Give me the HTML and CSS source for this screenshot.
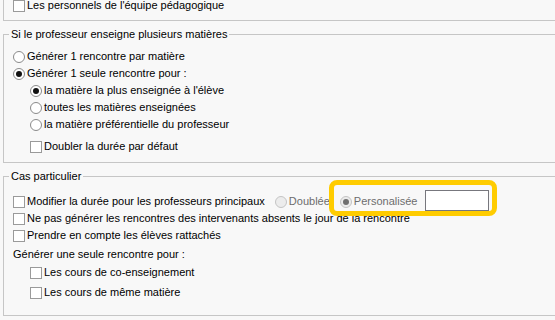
FILE: index.html
```html
<!DOCTYPE html>
<html lang="fr">
<head>
<meta charset="utf-8">
<title>Rencontres</title>
<link rel="stylesheet" href="styles.css">
</head>
<body>
<div class="page">
  <fieldset class="box box-top">
    <div class="inner inner-top">
      <label class="row row-cut"><span class="chk"></span><span>Les personnels de l'équipe pédagogique</span></label>
    </div>
  </fieldset>

  <fieldset class="box box-mid">
    <legend class="legend">Si le professeur enseigne plusieurs matières</legend>
    <div class="inner inner-mid">
      <label class="row"><span class="rad"></span><span>Générer 1 rencontre par matière</span></label>
      <label class="row"><span class="rad on"></span><span>Générer 1 seule rencontre pour :</span></label>
      <label class="row indent"><span class="rad on"></span><span>la matière la plus enseignée à l'élève</span></label>
      <label class="row indent"><span class="rad"></span><span>toutes les matières enseignées</span></label>
      <label class="row indent"><span class="rad"></span><span>la matière préférentielle du professeur</span></label>
      <label class="row indent gap5"><span class="chk"></span><span>Doubler la durée par défaut</span></label>
    </div>
  </fieldset>

  <fieldset class="box box-bot">
    <legend class="legend">Cas particulier</legend>
    <div class="inner inner-bot">
      <div class="row">
        <span class="chk"></span><span>Modifier la durée pour les professeurs principaux</span>
        <span class="opt opt-first"><span class="rad dis"></span><span class="dis-text">Doublée</span></span>
        <span class="opt opt-second"><span class="rad dis on"></span><span class="dis-text">Personalisée</span></span>
        <span class="field"></span>
      </div>
      <label class="row"><span class="chk"></span><span>Ne pas générer les rencontres des intervenants absents le jour de la rencontre</span></label>
      <label class="row"><span class="chk"></span><span>Prendre en compte les élèves rattachés</span></label>
      <div class="row gap2">Générer une seule rencontre pour :</div>
      <label class="row indent gap1"><span class="chk"></span><span>Les cours de co-enseignement</span></label>
      <label class="row indent gap3"><span class="chk"></span><span>Les cours de même matière</span></label>
    </div>
  </fieldset>

  <div class="highlight"></div>
</div>
</body>
</html>
```

FILE: styles.css
```css
html, body {
  margin: 0;
  padding: 0;
  background: #f8f8f8;
  overflow: hidden;
  width: 555px;
  height: 320px;
}

.page {
  position: relative;
  display: flow-root;
  width: 552px;
  padding-left: 3px;
  font-family: "Liberation Sans", Arial, sans-serif;
  font-size: 11px;
  color: #000;
}

.box {
  margin: 0;
  padding: 0;
  border: 1px solid #c6c6c6;
  border-right: none;
  min-width: 0;
}

.box-top {
  border-top: none;
}

.box-mid,
.box-bot {
  margin-top: 6px;
}

.legend {
  margin-left: 5px;
  padding: 0 2px;
  line-height: 14px;
  height: 14px;
}

.inner {
  padding-left: 9px;
  display: flex;
  flex-direction: column;
}

.inner-top {
  padding-top: 0;
  padding-bottom: 9px;
}

.inner-mid {
  padding-top: 7px;
  padding-bottom: 7px;
}

.inner-bot {
  padding-top: 10px;
  padding-bottom: 14px;
}

.row {
  display: flex;
  align-items: center;
  height: 17px;
  line-height: 17px;
  white-space: nowrap;
  gap: 2px;
}

.row-cut {
  height: 11px;
  line-height: 11px;
}

.indent {
  padding-left: 17px;
}

.gap1 { margin-top: 1px; }
.gap2 { margin-top: 2px; }
.gap3 { margin-top: 3px; }
.gap5 { margin-top: 5px; }

.chk {
  box-sizing: border-box;
  width: 12px;
  height: 12px;
  border: 1px solid #9a9a9a;
  background: #fff;
  flex: none;
}

.rad {
  box-sizing: border-box;
  width: 12px;
  height: 12px;
  border: 1px solid #8a8a8a;
  border-radius: 50%;
  background: #fff;
  flex: none;
  display: flex;
  align-items: center;
  justify-content: center;
}

.rad.on::after {
  content: "";
  width: 6px;
  height: 6px;
  border-radius: 50%;
  background: #111;
}

.rad.dis {
  border-color: #c4c4c4;
  background: #ececec;
}

.rad.dis.on::after {
  background: #6f6f6f;
}

.opt {
  display: flex;
  align-items: center;
  gap: 2px;
}

.opt-first {
  margin-left: 8px;
}

.opt-second {
  margin-left: 8px;
}

.dis-text {
  color: #6d6d6d;
}

.field {
  box-sizing: border-box;
  width: 64px;
  height: 21px;
  border: 1px solid #77777d;
  background: #fff;
  margin-left: 6px;
  margin-bottom: 3px;
  flex: none;
}

.highlight {
  position: absolute;
  left: 329px;
  top: 180px;
  width: 168px;
  height: 36px;
  box-sizing: border-box;
  border: 5px solid #ffcc00;
  border-radius: 8px;
  pointer-events: none;
}
```
